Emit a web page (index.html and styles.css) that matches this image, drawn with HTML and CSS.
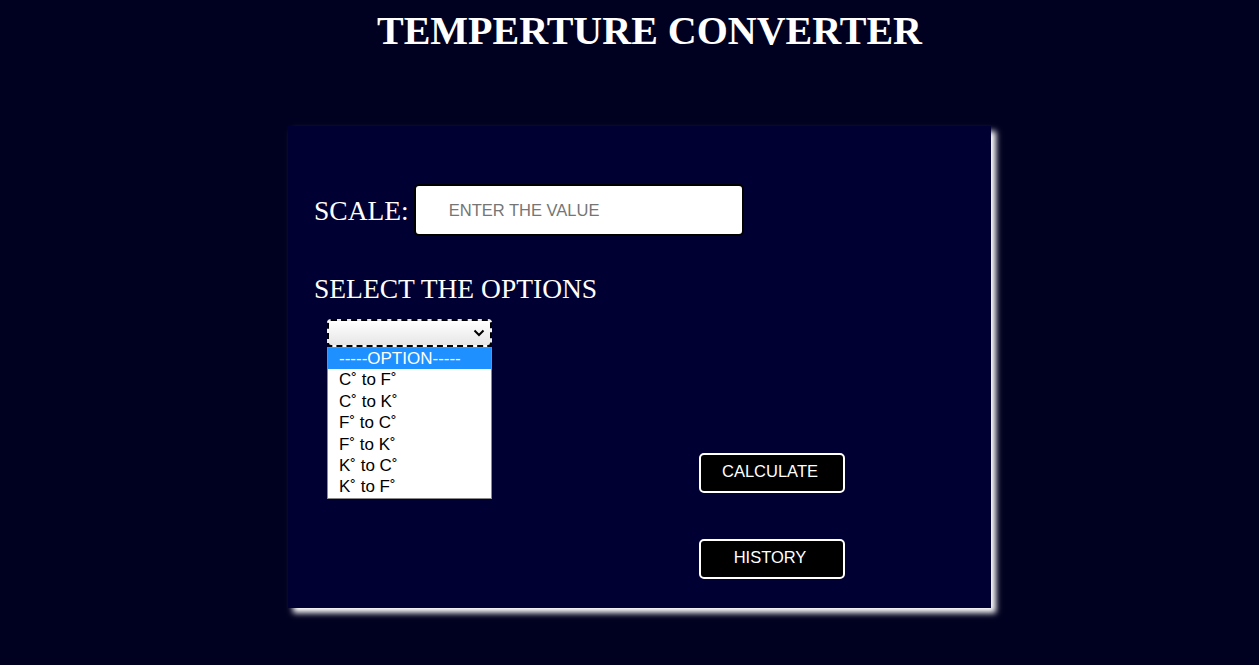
FILE: index.html
```html
<!DOCTYPE html>
<html>
<head>
<meta charset="utf-8">
<title>Temperture Converter</title>
<link rel="stylesheet" href="styles.css">
</head>
<body>
<h1 class="title">TEMPERTURE CONVERTER</h1>
<div class="stage">
  <div class="card">
    <div class="scale-row">
      <label class="label">SCALE:</label>
      <input class="value-input" type="text" placeholder="ENTER THE VALUE">
    </div>
    <div class="label options-label">SELECT THE OPTIONS</div>
    <div class="lower">
      <div class="select-wrap">
        <div class="select">
          <svg class="chev" width="12" height="8" viewBox="0 0 12 8"><path d="M1.5 1.5 L6 6 L10.5 1.5" fill="none" stroke="#000" stroke-width="2"/></svg>
        </div>
        <ul class="dropdown">
          <li class="opt active">-----OPTION-----</li>
          <li class="opt">C˚ to F˚</li>
          <li class="opt">C˚ to K˚</li>
          <li class="opt">F˚ to C˚</li>
          <li class="opt">F˚ to K˚</li>
          <li class="opt">K˚ to C˚</li>
          <li class="opt">K˚ to F˚</li>
        </ul>
      </div>
      <div class="actions">
        <button class="btn calc">CALCULATE</button>
        <button class="btn hist">HISTORY</button>
      </div>
    </div>
  </div>
</div>
</body>
</html>
```
FILE: styles.css
```css
html, body {
  margin: 0;
  padding: 0;
  background: #000020;
  height: 100%;
}
body {
  font-family: "Liberation Serif", "Times New Roman", serif;
  color: #fff;
}
.title {
  margin: 0;
  padding: 10px 0 0 40px;
  text-align: center;
  font-size: 40px;
  font-weight: bold;
  line-height: 42px;
}
.stage {
  display: flex;
  justify-content: center;
  padding: 74px 0 0 20px;
}
.card {
  width: 703px;
  height: 482px;
  box-sizing: border-box;
  background: #000033;
  box-shadow: 5px 5px 6px #ffffff;
  padding: 58px 0 0 26px;
}
.scale-row {
  display: flex;
  align-items: center;
  gap: 5px;
}
.label {
  font-size: 27.5px;
  line-height: 31px;
}
.value-input {
  flex-shrink: 0;
  width: 330px;
  height: 52px;
  box-sizing: border-box;
  border: 2px solid #000;
  border-radius: 5px;
  background: #fff;
  padding: 0 0 0 33px;
  font-family: "Liberation Sans", Arial, sans-serif;
  font-size: 16.5px;
  outline: none;
}
.value-input::placeholder {
  color: #757575;
}
.options-label {
  margin-top: 37px;
}
.lower {
  display: flex;
  margin-top: 15px;
}
.select-wrap {
  position: relative;
  margin-left: 13px;
  width: 165px;
  flex-shrink: 0;
}
.select {
  height: 28px;
  box-sizing: border-box;
  border: 2px dashed #000;
  border-radius: 4px;
  background: linear-gradient(#ffffff, #e6e6e6);
  display: flex;
  align-items: center;
  justify-content: flex-end;
  padding-right: 5px;
}
.dropdown {
  position: absolute;
  left: 0;
  top: 28px;
  width: 165px;
  box-sizing: border-box;
  margin: 0;
  padding: 0;
  list-style: none;
  background: #fff;
  border: 1px solid #8a8a8a;
}
.opt {
  font-family: "Liberation Sans", Arial, sans-serif;
  font-size: 17px;
  line-height: 21.4px;
  color: #000;
  padding-left: 11px;
  white-space: nowrap;
}
.opt.active {
  background: #1e90ff;
  color: #fff;
}
.actions {
  display: flex;
  flex-direction: column;
  gap: 46px;
  margin-left: 207px;
  margin-top: 134px;
}
.btn {
  width: 146px;
  height: 40px;
  box-sizing: border-box;
  background: #000;
  color: #fff;
  border: 2px solid #fff;
  border-radius: 5px;
  font-family: "Liberation Sans", Arial, sans-serif;
  font-size: 16.5px;
  padding: 0 4px 4px 0;
}
```
